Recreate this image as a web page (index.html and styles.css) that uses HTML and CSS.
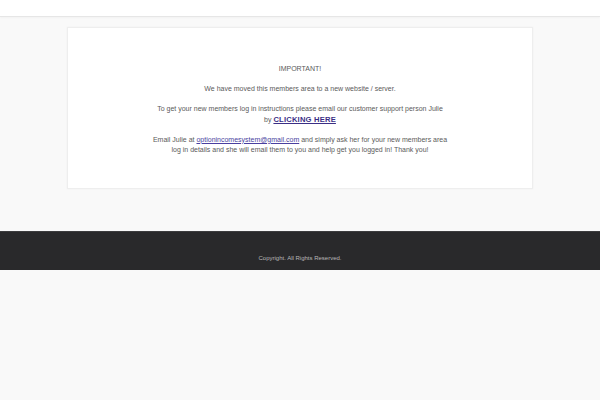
FILE: index.html
```html
<!DOCTYPE html>
<html>
<head>
<meta charset="utf-8">
<link rel="stylesheet" href="styles.css">
</head>
<body>
<header class="topbar"></header>
<main class="main">
  <div class="card">
    <div class="content">
      <p>IMPORTANT!</p>
      <p>We have moved this members area to a new website / server.</p>
      <p>To get your new members log in instructions please email our customer support person Julie <span class="nowrap">by <a class="cta" href="#">CLICKING HERE</a></span></p>
      <p>Email Julie at <a class="mail" href="#">optionincomesystem@gmail.com</a> and simply ask her for your new members area log in details and she will email them to you and help get you logged in! Thank you!</p>
    </div>
  </div>
</main>
<footer class="footer">
  <span class="copy">Copyright. All Rights Reserved.</span>
</footer>
</body>
</html>
```

FILE: styles.css
```css
html, body {
  margin: 0;
  padding: 0;
  background: #f9f9f9;
  font-family: "Liberation Sans", Arial, sans-serif;
}
.topbar {
  height: 16px;
  background: #ffffff;
  border-bottom: 1px solid #e6e6e6;
  box-shadow: 0 1px 2px rgba(0,0,0,0.03);
}
.main {
  padding: 10px 0 42px;
  display: flex;
  justify-content: center;
}
.card {
  width: 464px;
  height: 160px;
  background: #ffffff;
  border: 1px solid #eeeeee;
  box-shadow: 0 0 2px rgba(0,0,0,0.04);
  display: flex;
  justify-content: center;
}
.content {
  width: 298px;
  padding-top: 36px;
  text-align: center;
  color: #5a5a5a;
  font-size: 7px;
  line-height: 10.5px;
}
.content p {
  margin: 0 0 9.5px;
}
.nowrap {
  white-space: nowrap;
}
.cta {
  color: #3b2f86;
  font-weight: bold;
  font-size: 7.6px;
  letter-spacing: 0.2px;
}
.mail {
  color: #4a3fa0;
}
.footer {
  height: 39px;
  background: #29292b;
  border-top: 1px solid #3c3c3e;
  display: flex;
  justify-content: center;
  align-items: flex-end;
  box-sizing: border-box;
}
.copy {
  color: #b8b8b8;
  font-size: 6px;
  line-height: 6px;
  margin-bottom: 9px;
}
```
